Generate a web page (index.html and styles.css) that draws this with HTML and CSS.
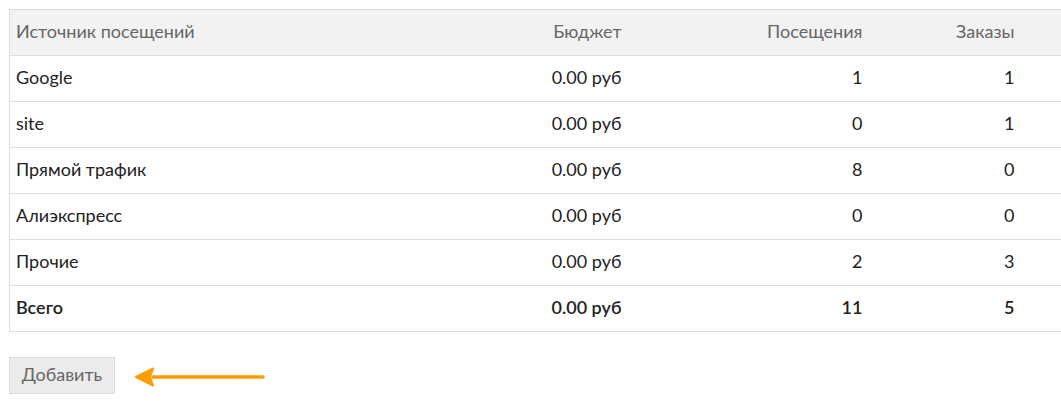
FILE: index.html
```html
<!DOCTYPE html>
<html lang="ru">
<head>
<meta charset="utf-8">
<link rel="stylesheet" href="styles.css">
</head>
<body>
<div class="page">
  <table class="stats">
    <colgroup>
      <col class="c-src"><col class="c-budget"><col class="c-visits"><col class="c-orders"><col class="c-extra">
    </colgroup>
    <thead>
      <tr><th class="left">Источник посещений</th><th>Бюджет</th><th>Посещения</th><th>Заказы</th><th></th></tr>
    </thead>
    <tbody>
      <tr><td class="left">Google</td><td>0.00 руб</td><td>1</td><td>1</td><td></td></tr>
      <tr><td class="left">site</td><td>0.00 руб</td><td>0</td><td>1</td><td></td></tr>
      <tr><td class="left">Прямой трафик</td><td>0.00 руб</td><td>8</td><td>0</td><td></td></tr>
      <tr><td class="left">Алиэкспресс</td><td>0.00 руб</td><td>0</td><td>0</td><td></td></tr>
      <tr><td class="left">Прочие</td><td>0.00 руб</td><td>2</td><td>3</td><td></td></tr>
      <tr class="total"><td class="left">Всего</td><td>0.00 руб</td><td>11</td><td>5</td><td></td></tr>
    </tbody>
  </table>
  <div class="actions">
    <button class="btn">Добавить</button>
    <svg class="arrow" width="140" height="24" viewBox="0 0 140 24">
      <path d="M20 12 H130" stroke="#ff9c00" stroke-width="3.5" stroke-linecap="round" fill="none"/>
      <path d="M3 12 L20 3.5 L17 12 L20 20.5 Z" fill="#ff9c00" stroke="#ff9c00" stroke-width="2" stroke-linejoin="round"/>
    </svg>
  </div>
</div>
</body>
</html>
```
FILE: styles.css
```css
html, body {
  margin: 0;
  padding: 0;
  background: #fff;
  overflow: hidden;
}
.page {
  padding: 9px 0 0 9px;
  font-family: Lato, "Liberation Sans", sans-serif;
  font-size: 18px;
  color: #222;
}
.stats {
  border-collapse: collapse;
  width: 1052px;
  table-layout: fixed;
  border: 1px solid #ddd;
}
.c-src { width: 470px; }
.c-budget { width: 150px; }
.c-visits { width: 241px; }
.c-orders { width: 152px; }
.c-extra { width: 39px; }
.stats th, .stats td {
  height: 45px;
  padding: 0 8px 4px 6px;
  text-align: right;
  border-top: 1px solid #ddd;
  border-bottom: 1px solid #ddd;
  box-sizing: border-box;
  white-space: nowrap;
  line-height: 22px;
}
.stats th {
  background: #f2f2f2;
  color: #666;
  font-weight: normal;
  height: 46px;
}
.stats .left { text-align: left; }
.stats tbody td { height: 46px; }
.stats .total td { font-weight: 600; }
.actions {
  display: flex;
  align-items: center;
  margin-top: 25px;
}
.btn {
  height: 37px;
  width: 106px;
  padding: 0 0 3px;
  background: #ebebeb;
  border: 1px solid #dcdcdc;
  border-radius: 0;
  color: #666;
  font-family: Lato, "Liberation Sans", sans-serif;
  font-size: 18px;
}
.arrow {
  margin-left: 18px;
  margin-top: 2px;
}
```
